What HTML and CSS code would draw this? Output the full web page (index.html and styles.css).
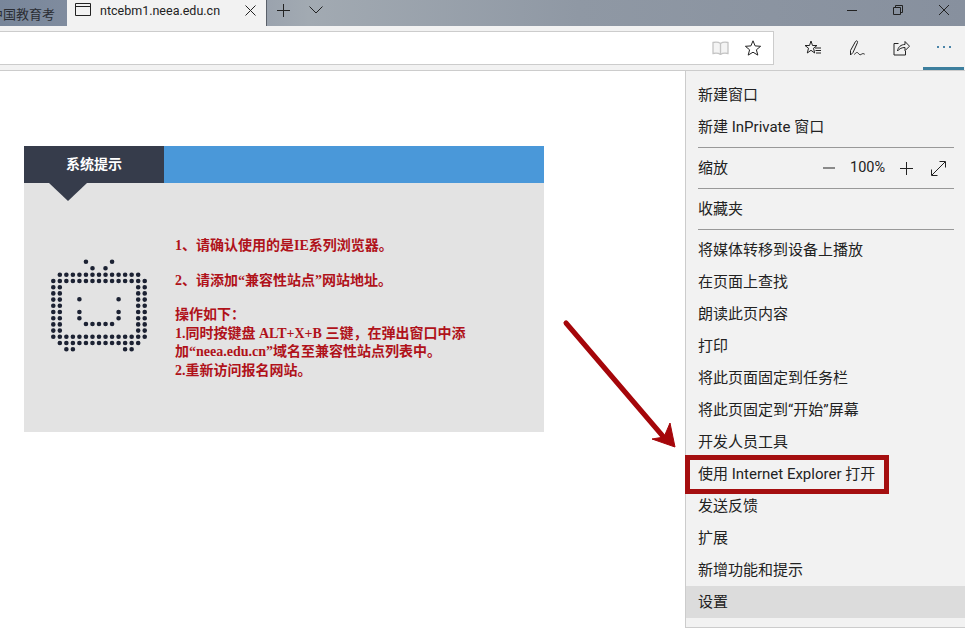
FILE: index.html
```html
<!DOCTYPE html>
<html lang="zh-CN">
<head>
<meta charset="UTF-8">
<meta name="viewport" content="width=device-width, initial-scale=1.0">
<title>ntcebm1.neea.edu.cn</title>
<link rel="stylesheet" href="styles.css">
</head>
<body>

<div class="title-bar">
    <div class="tab tab-back">中国教育考</div>
    <div class="tab tab-active">
        <svg class="tab-icon" width="16" height="13" viewBox="0 0 16 13"><path d="M.5.5h15v12H.5zM.5 3.5h15"/></svg>
        <span class="tab-name">ntcebm1.neea.edu.cn</span>
        <svg class="tab-close" width="11" height="11" viewBox="0 0 11 11"><path d="M.5.5l10 10M10.5.5l-10 10"/></svg>
    </div>
    <svg class="tab-add" width="13" height="13" viewBox="0 0 13 13"><path d="M6.5 0v13M0 6.5h13"/></svg>
    <svg class="tab-list" width="14" height="8" viewBox="0 0 14 8"><path d="M.5.5L7 7 13.5.5"/></svg>
    <div class="window-buttons">
        <svg width="10" height="10" viewBox="0 0 10 10"><path d="M0 5.5h10"/></svg>
        <svg width="10" height="10" viewBox="0 0 10 10"><path d="M.5 2.5h7v7h-7zM2.5 2.5v-2h7v7h-2"/></svg>
        <svg width="10" height="10" viewBox="0 0 10 10"><path d="M0 0l10 10M10 0L0 10"/></svg>
    </div>
</div>

<div class="toolbar">
    <div class="address-box">
        <svg class="icon-book" width="17" height="14" viewBox="0 0 17 14"><path d="M8.5 2.500C6.500 1 3.500 1 1 1.500v11c2.500-.5 5.500-.5 7.500 1 2-1.500 5-1.500 7.500-1v-11c-2.500-.5-5.500-.5-7.500 1zM8.500 2.500v11"/></svg>
        <svg class="icon-dark" width="16" height="16" viewBox="0 0 16 16"><path d="M8 .8l2.100 5.100 5.500.4-4.200 3.500 1.400 5.300L8 12.200l-4.800 2.900 1.400-5.300L.4 6.300l5.500-.4z"/></svg>
    </div>
    <div class="tool-buttons">
        <div class="tool-button">
            <svg class="icon-dark" width="16" height="16" viewBox="0 0 16 16"><path d="M6 1l1.500 4.500H12L8.500 8.200l1.200 4.800L6 10.300 2.300 13l1.200-4.800L0 5.500h4.500zM10 8h6M10.500 10.500H16M11 13h5"/></svg>
        </div>
        <div class="tool-button">
            <svg class="icon-dark" width="16" height="16" viewBox="0 0 16 16"><path d="M1.500 15V10.500L6.500 1.500C7.500.3 9 .8 8.500 2.500L4 12.500zM5.500 14.500c1.500-2.500 3-2.500 4-1s2 1.500 3 .7 2-.7 3.200 0"/></svg>
        </div>
        <div class="tool-button">
            <svg class="icon-dark" width="17" height="16" viewBox="0 0 17 16"><path d="M5.500 3.500H1v11.500h11.500v-4M4.500 11c.5-4 3.500-6.500 7.500-6.500V1.500l4.500 4.700-4.500 4.500V7.500c-3 0-5.500 1-7.500 3.500z"/></svg>
        </div>
        <div class="tool-button is-open">
            <span class="more-dots"></span><span class="more-dots"></span><span class="more-dots"></span>
        </div>
    </div>
</div>

<div class="main">
    <div class="notice">
        <div class="notice-head">
            <div class="notice-title">系统提示</div>
        </div>
        <div class="notice-body">
            <svg class="tv-icon" width="100" height="96" viewBox="0 0 100 96">
                <path class="dots-h" d="M9.830 16.700H88.300M3.300 23H94.800M3.300 78.700H94.800M9.830 85H88.300M16.360 91.300H23M75.100 91.300H81.800M35.950 3.700h.01M62.070 3.700h.01M42.500 10.300h.01M55.500 10.300h.01M29.400 41.300h.01M68.600 41.300h.01M29.400 54h.01M68.600 54h.01M29.400 60.300h.01M68.600 60.300h.01M35.950 66H62.100"/>
                <path class="dots-v" d="M3.300 29.200V72.700M9.830 29.200V72.700M88.190 29.200V72.700M94.720 29.200V72.700"/>
            </svg>
            <div class="notice-text">
                <p>1、请确认使用的是IE系列浏览器。</p>
                <p>2、请添加“兼容性站点”网站地址。</p>
                <p>操作如下：<br>1.同时按键盘 ALT+X+B 三键，在弹出窗口中添<br>加“neea.edu.cn”域名至兼容性站点列表中。<br>2.重新访问报名网站。</p>
            </div>
        </div>
    </div>

    <svg class="arrow" width="125" height="140" viewBox="0 0 125 140">
        <path class="arrow-shaft" d="M6 6L107 124"/>
        <path class="arrow-head" d="M115 130L110 106 104 120 92 122z"/>
    </svg>

    <div class="menu">
        <div class="menu-item">新建窗口</div>
        <div class="menu-item">新建 InPrivate 窗口</div>
        <div class="menu-line"></div>
        <div class="menu-item zoom-row">
            <span>缩放</span>
            <div class="zoom-controls">
                <svg width="12" height="12" viewBox="0 0 12 12"><path d="M0 6h12"/></svg>
                <span class="zoom-value">100%</span>
                <svg width="13" height="13" viewBox="0 0 13 13"><path d="M6.500 0v13M0 6.500h13"/></svg>
                <svg class="zoom-full" width="15" height="15" viewBox="0 0 15 15"><path d="M1 14L14 1M8.500.5h6v6M.5 8.500v6h6"/></svg>
            </div>
        </div>
        <div class="menu-line"></div>
        <div class="menu-item">收藏夹</div>
        <div class="menu-line"></div>
        <div class="menu-item">将媒体转移到设备上播放</div>
        <div class="menu-item">在页面上查找</div>
        <div class="menu-item">朗读此页内容</div>
        <div class="menu-item">打印</div>
        <div class="menu-item">将此页面固定到任务栏</div>
        <div class="menu-item">将此页固定到“开始”屏幕</div>
        <div class="menu-item">开发人员工具</div>
        <div class="menu-item is-marked">使用 Internet Explorer 打开</div>
        <div class="menu-item">发送反馈</div>
        <div class="menu-item">扩展</div>
        <div class="menu-item">新增功能和提示</div>
        <div class="menu-item is-hover">设置</div>
    </div>
</div>

</body>
</html>
```

FILE: styles.css
```css
html, body {
    margin: 0;
    height: 642px;
    overflow: hidden;
    background: #fff;
}

body {
    font-family: Roboto, "Noto Sans CJK SC", sans-serif;
    color: #222;
}

svg path {
    fill: none;
    stroke: #222;
    stroke-width: 1;
}

/* title bar */
.title-bar {
    display: flex;
    align-items: center;
    height: 26px;
    background: linear-gradient(90deg, #78869a 0, #8d96a6 20%, #a2aab2 32%, #8f98a4 60%, #87909e 100%);
}

.tab {
    display: flex;
    align-items: center;
    height: 26px;
    font-size: 13px;
    overflow: hidden;
}

.tab-back {
    flex: none;
    width: 67px;
    padding-right: 12px;
    box-sizing: border-box;
    justify-content: flex-end;
    white-space: nowrap;
    color: #2a2d33;
}

.tab-active {
    flex: none;
    width: 200px;
    box-sizing: border-box;
    padding-left: 8px;
    background: #f2f2f2;
    border-right: 1px solid #5a606a;
}

.tab-icon {
    flex: none;
    margin-top: -7px;
}

.tab-name {
    margin-left: 9px;
    margin-top: -6px;
    width: 145px;
    font-size: 12.5px;
}

.tab-close {
    flex: none;
    margin-top: -6px;
}

.tab-add {
    margin-left: 10px;
    margin-top: -5px;
}

.tab-list {
    margin-left: 19px;
    margin-top: -6px;
}

.window-buttons {
    display: flex;
    gap: 36px;
    margin-left: auto;
    margin-right: 16px;
    margin-top: -6px;
}

/* toolbar */
.toolbar {
    display: flex;
    height: 44px;
    background: #f2f2f2;
    border-bottom: 1px solid #ccc;
}

.address-box {
    display: flex;
    align-items: center;
    justify-content: flex-end;
    gap: 16px;
    flex: none;
    width: 775px;
    height: 34px;
    box-sizing: border-box;
    margin: 5px 0 0 -1px;
    padding-right: 12px;
    background: #fff;
    border: 1px solid #ccc;
}

svg .icon-book path,
.icon-book path {
    stroke: #c4c4c4;
    stroke-width: 1.3;
    fill: #f4f4f4;
}

.tool-buttons {
    display: flex;
    margin-left: 17px;
}

.tool-button {
    display: flex;
    align-items: center;
    justify-content: center;
    flex: none;
    width: 44px;
    height: 44px;
    box-sizing: border-box;
}

.is-open {
    gap: 4px;
    width: 41px;
    padding-top: 1px;
    border-bottom: 3px solid #3d7f9e;
}

.more-dots {
    width: 2px;
    height: 2px;
    background: #4a84a8;
}

/* page */
.main {
    position: relative;
    height: 571px;
    padding: 75px 0 0 24px;
    box-sizing: border-box;
}

.notice {
    width: 520px;
    height: 286px;
    background: #e3e3e3;
}

.notice-head {
    height: 37px;
    background: #4a98d9;
}

.notice-title {
    position: relative;
    width: 140px;
    height: 37px;
    line-height: 37px;
    text-align: center;
    font-size: 14px;
    font-weight: 700;
    color: #fff;
    background: #363c4b;
}

.notice-title::after {
    content: "";
    position: absolute;
    left: 25px;
    top: 37px;
    border-left: 19px solid transparent;
    border-right: 19px solid transparent;
    border-top: 18px solid #363c4b;
}

.notice-body {
    display: flex;
    padding: 54px 0 0 26px;
}

.tv-icon {
    flex: none;
    margin-top: 21px;
}

.dots-h, .dots-v {
    stroke: #1c2233;
    stroke-width: 4.6;
    stroke-linecap: round;
}

.dots-h {
    stroke-dasharray: 0 6.53;
}

.dots-v {
    stroke-dasharray: 0 6.2;
}

.notice-text {
    margin-left: 25px;
    font-family: "Liberation Serif", "Noto Sans CJK SC", serif;
    font-size: 14px;
    font-weight: 700;
    line-height: 18.5px;
    color: #b0121a;
}

.notice-text p {
    margin: 0 0 16px;
}

/* annotation */
.arrow {
    position: absolute;
    left: 560px;
    top: 246px;
    z-index: 2;
}

.arrow-shaft {
    stroke: #a5060a;
    stroke-width: 5;
    stroke-linecap: round;
}

svg .arrow-head {
    fill: #a5060a;
    stroke: #a5060a;
}

/* settings menu */
.menu {
    position: absolute;
    top: 0;
    right: 0;
    width: 280px;
    height: 557px;
    box-sizing: border-box;
    padding-top: 8px;
    background: #f2f2f2;
    border-left: 1px solid #ccc;
    border-bottom: 1px solid #ccc;
    font-size: 15px;
}

.menu-item {
    position: relative;
    height: 32px;
    line-height: 32px;
    padding-left: 12px;
    white-space: nowrap;
}

.menu-line {
    height: 1px;
    margin: 4px 11px 4px 12px;
    background: #999;
}

.zoom-row {
    display: flex;
    justify-content: space-between;
    padding-right: 19px;
}

.zoom-controls {
    display: flex;
    align-items: center;
    gap: 15px;
}

.zoom-value {
    font-size: 14.5px;
    width: 35px;
}

.zoom-full {
    margin-left: 3px;
}

.is-hover {
    background: #dcdcdc;
}

.is-marked::after {
    content: "";
    position: absolute;
    left: -1px;
    top: -3px;
    bottom: -4px;
    width: 194px;
    border: 5px solid #a50f10;
}
```
